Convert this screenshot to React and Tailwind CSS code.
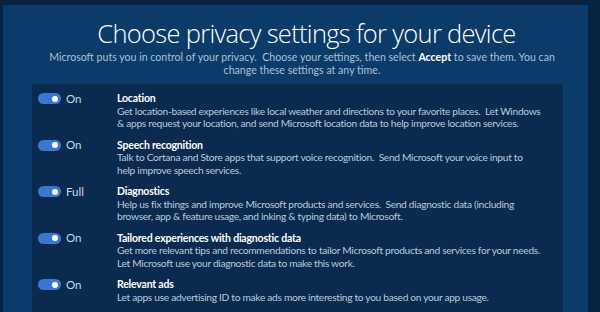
import React from "react";

const rows = [
  {
    state: "On",
    title: "Location",
    desc: [
      "Get location-based experiences like local weather and directions to your favorite places.  Let Windows",
      "& apps request your location, and send Microsoft location data to help improve location services.",
    ],
  },
  {
    state: "On",
    title: "Speech recognition",
    desc: [
      "Talk to Cortana and Store apps that support voice recognition.  Send Microsoft your voice input to",
      "help improve speech services.",
    ],
  },
  {
    state: "Full",
    title: "Diagnostics",
    desc: [
      "Help us fix things and improve Microsoft products and services.  Send diagnostic data (including",
      "browser, app & feature usage, and inking & typing data) to Microsoft.",
    ],
  },
  {
    state: "On",
    title: "Tailored experiences with diagnostic data",
    desc: [
      "Get more relevant tips and recommendations to tailor Microsoft products and services for your needs.",
      "Let Microsoft use your diagnostic data to make this work.",
    ],
  },
  {
    state: "On",
    title: "Relevant ads",
    desc: ["Let apps use advertising ID to make ads more interesting to you based on your app usage."],
  },
];

function Toggle() {
  return (
    <div className="w-[23px] h-[11px] rounded-full bg-[#3a78cf] flex items-center justify-end pr-[3px] shrink-0">
      <div className="w-[6px] h-[6px] rounded-full bg-white" />
    </div>
  );
}

export default function App() {
  return (
    <div
      className="w-[600px] h-[312px] bg-[#072340] flex pt-[5px] pl-[3px] pr-[12px] overflow-hidden"
      style={{ fontFamily: 'Lato, "Open Sans", sans-serif' }}
    >
      <div className="flex-1 min-w-0 bg-[#0b3b68] flex flex-col items-center">
        <h1
          className="mt-[12px] ml-[22px] text-[25.5px] leading-[32px] font-light text-white whitespace-nowrap tracking-[-0.7px]"
          style={{ fontFamily: '"Open Sans", sans-serif' }}
        >
          Choose privacy settings for your device
        </h1>
        <p className="mt-[2px] ml-[13px] text-[10.6px] leading-[13px] text-[#a9c0d8] text-center whitespace-pre">
          {"Microsoft puts you in control of your privacy.  Choose your settings, then select "}
          <span className="text-white font-bold">Accept</span>
          {" to save them. You can"}
          <br />
          {"change these settings at any time."}
        </p>
        <div className="mt-[7px] self-stretch ml-[29px] mr-[25px] flex-1 min-w-0 overflow-hidden bg-[#0a2b4f] pl-[6px] pt-[8px] flex flex-col gap-[9px]">
          {rows.map((r) => (
            <div key={r.title} className="flex">
              <div className="w-[79px] shrink-0 flex items-start gap-[5px] pt-[1px]">
                <Toggle />
                <span className="text-[11.5px] leading-[12px] text-[#cdd8e4] -mt-[0.5px]">{r.state}</span>
              </div>
              <div className="flex flex-col">
                <div className="text-[10.5px] leading-[12.5px] font-bold text-white tracking-[-0.2px]">{r.title}</div>
                {r.desc.map((d, i) => (
                  <div key={i} className="text-[10.2px] leading-[12.5px] text-[#b9cadb] whitespace-pre tracking-[-0.3px]">
                    {d}
                  </div>
                ))}
              </div>
            </div>
          ))}
        </div>
      </div>
    </div>
  );
}
